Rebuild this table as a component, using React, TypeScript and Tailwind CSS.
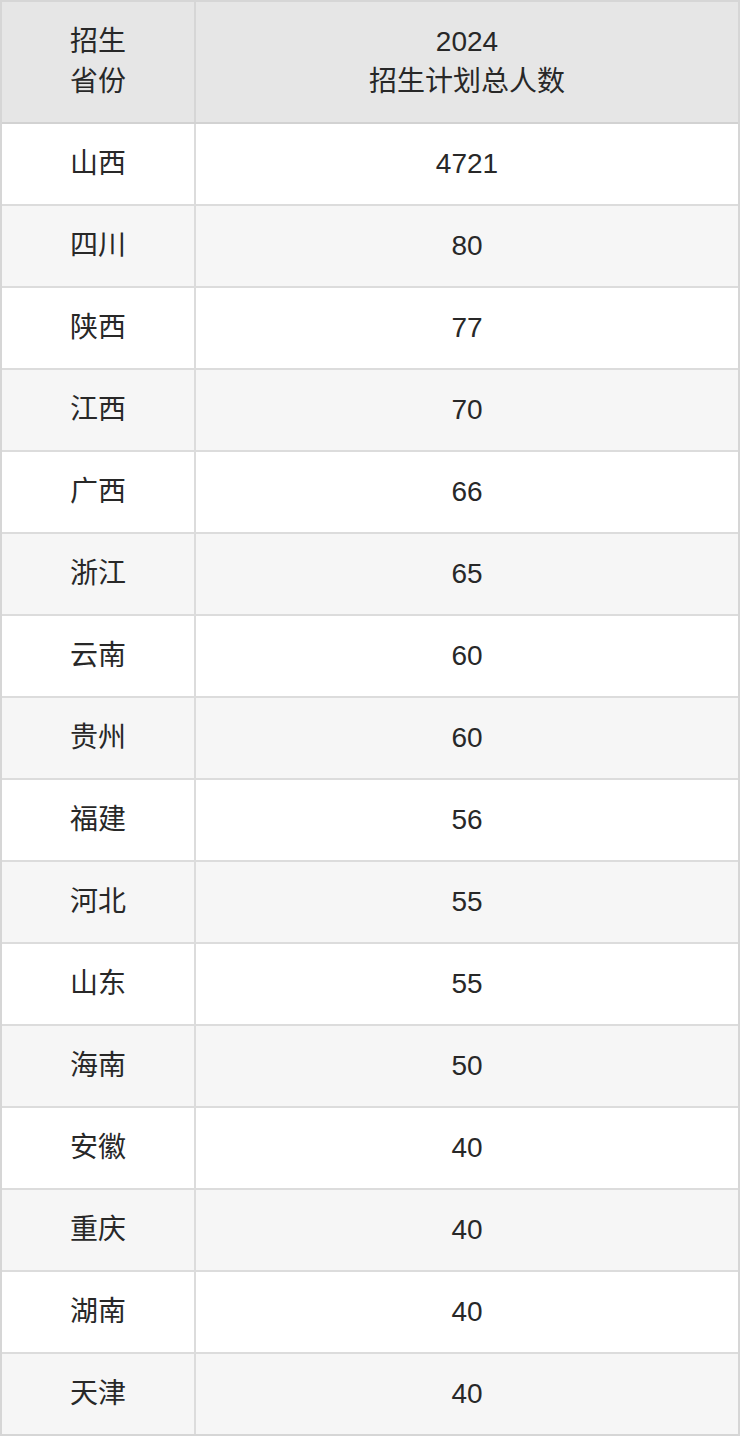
import React from "react";

const rows: [string, string][] = [
  ["山西", "4721"],
  ["四川", "80"],
  ["陕西", "77"],
  ["江西", "70"],
  ["广西", "66"],
  ["浙江", "65"],
  ["云南", "60"],
  ["贵州", "60"],
  ["福建", "56"],
  ["河北", "55"],
  ["山东", "55"],
  ["海南", "50"],
  ["安徽", "40"],
  ["重庆", "40"],
  ["湖南", "40"],
  ["天津", "40"],
];

export default function App() {
  return (
    <div
      className="w-[740px] bg-white text-[#282828] text-[28px] leading-[40px]"
      style={{ fontFamily: '"Liberation Sans", "Noto Sans CJK SC", sans-serif' }}
    >
      <div className="border-2 border-[#d6d6d6]">
        <div className="grid grid-cols-[194px_1fr] bg-[#e6e6e6] border-b-2 border-[#d2d2d2]">
          <div className="h-[120px] flex flex-col items-center justify-center border-r-2 border-[#d6d6d6] text-center">
            <div>招生</div>
            <div>省份</div>
          </div>
          <div className="h-[120px] flex flex-col items-center justify-center text-center">
            <div>2024</div>
            <div>招生计划总人数</div>
          </div>
        </div>
        {rows.map(([p, n], i) => (
          <div
            key={i}
            className={`grid grid-cols-[194px_1fr] ${i % 2 === 0 ? "bg-white" : "bg-[#f6f6f6]"} ${i < rows.length - 1 ? "border-b-2 border-[#dcdcdc]" : ""}`}
          >
            <div className="h-[80px] flex items-center justify-center border-r-2 border-[#dcdcdc]">{p}</div>
            <div className="h-[80px] flex items-center justify-center">{n}</div>
          </div>
        ))}
      </div>
    </div>
  );
}
